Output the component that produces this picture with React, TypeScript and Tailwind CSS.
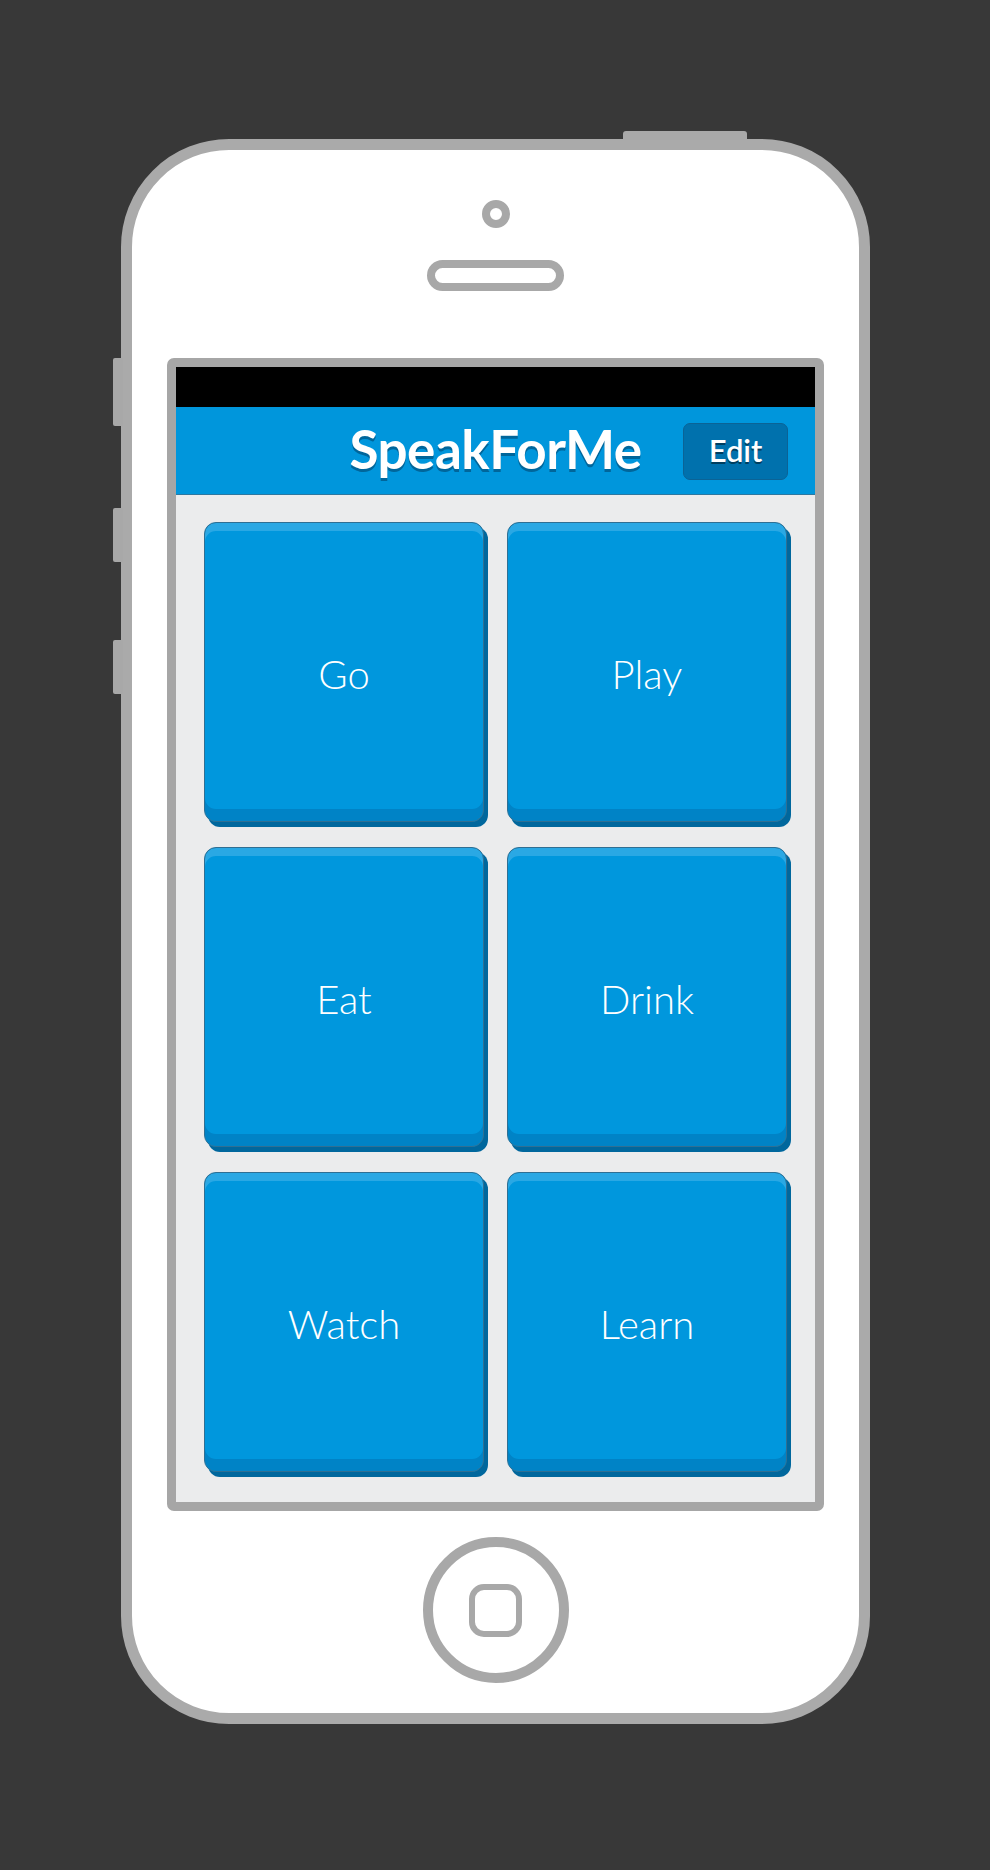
import React from "react";

// kata-kata yang ditampilkan di grid tombol
const words: string[] = ["Go", "Play", "Eat", "Drink", "Watch", "Learn"];

const WordTile: React.FC<{ label: string }> = ({ label }) => {
  return (
    <button className="flex h-[300px] w-full items-center justify-center rounded-[12px] border border-[#2f6f93] bg-[#0097dd] pt-[4px] text-[40px] font-light text-white shadow-[inset_0_8px_0_#2aa8e4,inset_0_-12px_0_#0083c6,4px_5px_0_#00679d]">
      {label}
    </button>
  );
};

const App: React.FC = () => {
  return (
    <div
      className="min-h-[1870px] w-[990px] bg-[#383838] pt-[139px]"
      style={{ fontFamily: "Lato, 'Noto Sans', sans-serif" }}
    >
      {/* Phone body */}
      <div className="relative ml-[121px] h-[1585px] w-[749px] rounded-[108px] border-[11px] border-[#aaaaaa] bg-white">
        {/* side buttons */}
        <div className="absolute left-[-19px] top-[208px] h-[68px] w-[10px] rounded-l-[2px] bg-[#a8a8a8]" />
        <div className="absolute left-[-19px] top-[358px] h-[54px] w-[10px] rounded-l-[2px] bg-[#a8a8a8]" />
        <div className="absolute left-[-19px] top-[490px] h-[54px] w-[10px] rounded-l-[2px] bg-[#a8a8a8]" />
        {/* top button */}
        <div className="absolute left-[491px] top-[-19px] h-[9px] w-[124px] rounded-t-[3px] bg-[#a8a8a8]" />

        <div className="flex flex-col items-center pt-[50px]">
          {/* camera */}
          <div className="h-[28px] w-[28px] rounded-full border-[8px] border-[#a8a8a8]" />
          {/* speaker */}
          <div className="mt-[32px] h-[31px] w-[137px] rounded-full border-[8px] border-[#a8a8a8]" />

          {/* Screen */}
          <div className="mt-[67px] flex h-[1153px] w-[657px] flex-col overflow-hidden rounded-[7px] border-[9px] border-[#a6a6a6] bg-[#ebeced]">
            <div className="h-[40px] bg-black" />
            <div className="relative flex h-[88px] items-center justify-center border-b border-[#2d78a0] bg-[#0096dc]">
              <h1 className="pb-[4px] text-[53px] font-bold tracking-[-0.5px] text-white [text-shadow:0_3px_0_#00669b]">
                SpeakForMe
              </h1>
              <button className="absolute right-[27px] top-[16px] flex h-[57px] w-[105px] items-center justify-center rounded-[7px] border border-[#0b6396] bg-[#0071ad] pb-[2px] text-[31px] font-semibold text-white [text-shadow:0_2px_0_#003f60]">
                Edit
              </button>
            </div>

            {/* Grid kata */}
            <div className="grid grid-cols-2 content-start gap-x-[23px] gap-y-[25px] px-[28px] pt-[27px]">
              {words.map((word) => (
                <WordTile key={word} label={word} />
              ))}
            </div>
          </div>

          {/* Home button */}
          <div className="mt-[26px] flex h-[146px] w-[146px] items-center justify-center rounded-full border-[10px] border-[#a8a8a8]">
            <div className="h-[53px] w-[53px] rounded-[15px] border-[6px] border-[#a8a8a8]" />
          </div>
        </div>
      </div>
    </div>
  );
};

export default App;
